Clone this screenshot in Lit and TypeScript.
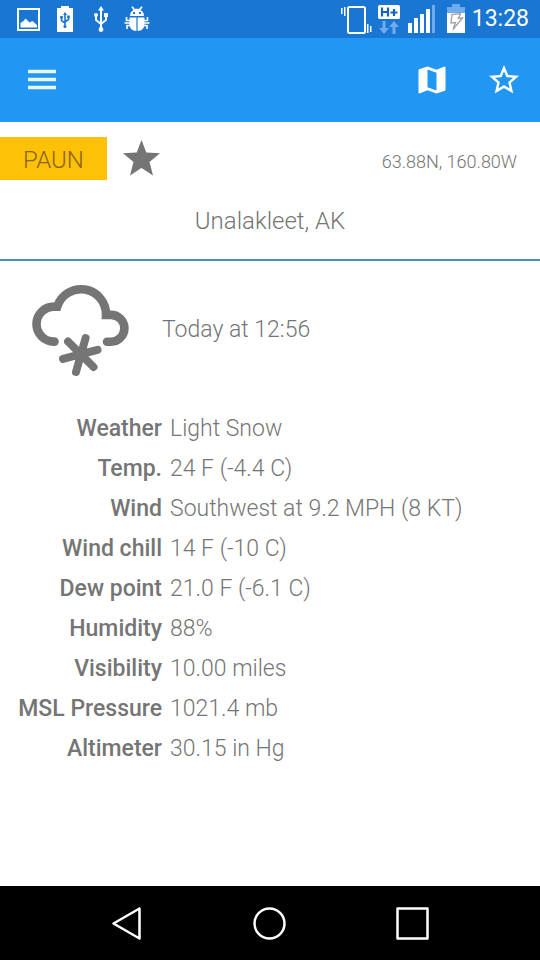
import { LitElement, html, css } from "lit";
import { customElement } from "lit/decorators.js";

@customElement("status-bar")
class StatusBar extends LitElement {
  static styles = css`
    :host {
      display: flex;
      justify-content: space-between;
      height: 38px;
      padding: 0 11px;
      background: #1976d2;
      color: #fff;
    }
    .group {
      display: flex;
      align-items: center;
    }
    svg {
      display: block;
      fill: #fff;
    }
    .clock {
      font-size: 23px;
      font-weight: 400;
      line-height: 38px;
    }
  `;

  render() {
    return html`
      <div class="group">
        <svg width="36" height="38" viewBox="0 0 36 38" aria-hidden="true">
          <path fill-rule="evenodd" d="M6 8h23v23H6zM8 10v19h19V10z" />
          <path d="M9.500 27.500V23l3-2 2-2.500 4 4 3-1.500 4.500 4v2.500z" />
        </svg>
        <svg width="36" height="38" viewBox="0 0 36 38" aria-hidden="true">
          <path d="M14 6h8v2h4v24H10V8h4z" />
          <g fill="none" stroke="#1976d2" stroke-width="1.6">
            <path d="M18 14v13M14.500 17v3.500l3.500 2.500M21.500 16v3.500L18 22" />
          </g>
          <path fill="#1976d2" d="M18 12l2 3h-4zM13.200 16h2.600v2.600h-2.600zM20.200 15.500h2.600v2.600h-2.600z" />
          <circle fill="#1976d2" cx="18" cy="26.500" r="1.600" />
        </svg>
        <svg width="36" height="38" viewBox="0 0 36 38" aria-hidden="true">
          <path fill="none" stroke="#fff" stroke-width="2" d="M18 9v20M13 14v6l5 4M23 14v6l-5 4" />
          <path d="M18 6l3 4.500h-6zM21 13h4v4h-4z" />
          <circle cx="13" cy="15" r="2" />
          <circle cx="18" cy="29.500" r="2.400" />
        </svg>
        <svg width="36" height="38" viewBox="0 0 36 38" aria-hidden="true">
          <path
            fill-rule="evenodd"
            d="M11 16c0-3 1.500-5 3.500-6L12.300 7.300l1.400-1.100 2.300 2.800c1.400-.4 2.600-.4 4 0l2.300-2.800 1.400 1.100L21.500 10c2 1 3.500 3 3.500 6zM14 12v2h2v-2zM20 12v2h2v-2z"
          />
          <path d="M10.500 17.500h6.900v13.500C13 31 10.500 28 10.500 24zM18.600 17.500h6.900V24c0 4-2.500 7-6.900 7z" />
          <path
            fill="none"
            stroke="#fff"
            stroke-width="1.600"
            d="M11 20.500H7.500V17M25 20.500h3.500V17M11 23H5.500M25 23h5.500M11 25.500H8V29M25 25.500h3V29"
          />
        </svg>
      </div>
      <div class="group">
        <svg width="33" height="38" viewBox="0 0 33 38" aria-hidden="true">
          <rect x="8" y="7" width="17" height="26" rx="1.500" fill="none" stroke="#fff" stroke-width="2" />
          <path d="M1 8h1.500v6H1zM4 7h1.500v9H4zM27 24h1.500v9H27zM30 26h1.500v6H30z" />
        </svg>
        <svg width="33" height="38" viewBox="0 0 33 38" aria-hidden="true">
          <rect x="5" y="5" width="22" height="14" rx="1.500" />
          <path
            fill="none"
            stroke="#1565c0"
            stroke-width="2.200"
            d="M9 7.500v9M15 7.500v9M9 12h6M17.500 12.500h7M21 9v7"
          />
          <path
            fill="#6fabed"
            d="M9.500 21h3v7H16l-5 6-5-6h3.500zM19.500 34h3v-7H26l-5-6-5 6h3.500z"
          />
        </svg>
        <svg width="33" height="38" viewBox="0 0 33 38" aria-hidden="true">
          <path d="M2 23h4v10H2zM8 18h4v15H8zM14 14h4v19h-4zM20 9h4v24h-4z" />
          <path fill="#6fabed" d="M26 5h3v28h-3z" />
        </svg>
        <svg width="33" height="38" viewBox="0 0 33 38" aria-hidden="true">
          <path fill="#6fabed" d="M13 4h8v3h5v6H8V7h5z" />
          <path d="M8 13h18v20H8z" />
          <path
            fill="#fff"
            stroke="#a6a6a6"
            stroke-width="1.400"
            d="M13 14.500l8.500-1-2 5 4-.5L14 29.500l2.500-7-4.500.5z"
          />
        </svg>
        <time class="clock">13:28</time>
      </div>
    `;
  }
}

@customElement("app-bar")
class AppBar extends LitElement {
  static styles = css`
    :host {
      display: flex;
      align-items: center;
      justify-content: space-between;
      height: 84px;
      padding: 0 0 0 6px;
      background: #2196f3;
    }
    .actions {
      display: flex;
    }
    button {
      display: grid;
      place-items: center;
      width: 72px;
      height: 72px;
      padding: 0;
      border: 0;
      background: none;
    }
    svg {
      display: block;
      fill: #fff;
    }
  `;

  render() {
    return html`
      <button type="button" aria-label="Menu">
        <svg width="36" height="36" viewBox="0 0 36 36">
          <path fill-opacity=".9" d="M4 7.700h28v3.600H4zM4 15.700h28v3.600H4zM4 23.700h28v3.600H4z" />
        </svg>
      </button>
      <div class="actions">
        <button type="button" aria-label="Map">
          <svg width="36" height="36" viewBox="0 0 24 24">
            <path
              d="M20.500 3l-.16.03L15 5.100 9 3 3.360 4.900c-.21.07-.36.25-.36.48V20.500c0 .28.22.5.5.5l.16-.03L9 18.900l6 2.100 5.640-1.900c.21-.07.36-.25.36-.48V3.500c0-.28-.22-.5-.5-.5zM15 19l-6-2.110V5l6 2.110V19z"
            />
          </svg>
        </button>
        <button type="button" aria-label="Add to favourites">
          <svg width="36" height="36" viewBox="0 0 24 24">
            <path
              d="M22 9.240l-7.190-.62L12 2 9.190 8.630 2 9.240l5.460 4.730L5.820 21 12 17.270 18.180 21l-1.630-7.030L22 9.240zM12 15.400l-3.760 2.270 1-4.280-3.320-2.880 4.380-.38L12 6.100l1.710 4.040 4.380.38-3.320 2.880 1 4.280L12 15.400z"
            />
          </svg>
        </button>
      </div>
    `;
  }
}

@customElement("nav-bar")
class NavBar extends LitElement {
  static styles = css`
    :host {
      display: flex;
      justify-content: center;
      height: 74px;
      background: #000;
    }
    button {
      display: grid;
      place-items: center;
      width: 143px;
      padding: 0;
      border: 0;
      background: none;
    }
    svg {
      display: block;
      fill: none;
      stroke: #fff;
      stroke-width: 2.5;
      stroke-linejoin: round;
    }
  `;

  render() {
    return html`
      <button type="button" aria-label="Back">
        <svg width="36" height="36" viewBox="0 0 36 36"><path d="M30.500 3.500v30L4.500 18.500z" /></svg>
      </button>
      <button type="button" aria-label="Home">
        <svg width="36" height="36" viewBox="0 0 36 36"><circle cx="17.500" cy="18.500" r="15" /></svg>
      </button>
      <button type="button" aria-label="Recent apps">
        <svg width="36" height="36" viewBox="0 0 36 36"><path d="M2.500 3.500h30v30h-30z" /></svg>
      </button>
    `;
  }
}

@customElement("app-root")
class AppRoot extends LitElement {
  static styles = css`
    :host {
      display: flex;
      flex-direction: column;
      min-height: 100vh;
      background: #fff;
      color: #757575;
      font-family: Roboto, "Liberation Sans", sans-serif;
      font-size: 23px;
      font-weight: 300;
      line-height: 40px;
    }
    main {
      flex: 1;
    }
    .station {
      border-bottom: 2px solid #4690c0;
    }
    .row {
      display: flex;
      align-items: flex-start;
      padding: 15px 23px 0 0;
    }
    .code {
      padding: 3px 23px 0;
      background: #ffc107;
      color: #8a6415;
      font-size: 24px;
    }
    .star {
      display: block;
      margin: 3px 0 0 16px;
      fill: #757575;
    }
    .coords {
      margin-left: auto;
      padding-top: 5px;
      font-size: 18px;
    }
    h1 {
      margin: 0;
      padding: 19px 0 18px;
      font-size: 24px;
      font-weight: 300;
      text-align: center;
    }
    .now {
      display: flex;
      align-items: center;
    }
    .time {
      padding-top: 2px;
    }
    .sky {
      display: block;
      fill: none;
      stroke: #757575;
    }
    table {
      margin-top: 12px;
      border-spacing: 0;
    }
    th,
    td {
      padding: 0;
      text-align: left;
    }
    th {
      width: 162px;
      font-weight: 500;
      text-align: right;
    }
    td {
      padding-left: 8px;
    }
  `;

  private readings = [
    ["Weather", "Light Snow"],
    ["Temp.", "24 F (-4.4 C)"],
    ["Wind", "Southwest at 9.2 MPH (8 KT)"],
    ["Wind chill", "14 F (-10 C)"],
    ["Dew point", "21.0 F (-6.1 C)"],
    ["Humidity", "88%"],
    ["Visibility", "10.00 miles"],
    ["MSL Pressure", "1021.4 mb"],
    ["Altimeter", "30.15 in Hg"],
  ];

  render() {
    return html`
      <status-bar></status-bar>
      <app-bar></app-bar>
      <main>
        <header class="station">
          <div class="row">
            <span class="code">PAUN</span>
            <svg class="star" width="37" height="36" viewBox="0 0 37 36" role="img" aria-label="Favourite">
              <path d="M18.500 0l4.800 12.500L37 13.300 26.500 22l3.500 13.500-11.500-7.500L7 35.500 10.500 22 0 13.300l13.700-.8z" />
            </svg>
            <span class="coords">63.88N, 160.80W</span>
          </div>
          <h1>Unalakleet, AK</h1>
        </header>
        <section class="now">
          <svg class="sky" width="162" height="136" viewBox="0 261 162 136" role="img" aria-label="Snow">
            <path
              stroke-width="8.600"
              stroke-linecap="round"
              d="M107 341.700h4a13.400 13.400 0 0 0 0-26.800H106A25 25 0 0 0 57.200 306.600H54a17.500 17.500 0 0 0 0 35h.500"
            />
            <path
              stroke-width="8"
              stroke-linecap="round"
              d="M85.600 338L76 372M63 358.800l34.500-9M68 341.500l25.500 25.500"
            />
          </svg>
          <span class="time">Today at 12:56</span>
        </section>
        <table>
          <tbody>
            ${this.readings.map(
              ([name, value]) => html`<tr>
                <th scope="row">${name}</th>
                <td>${value}</td>
              </tr>`
            )}
          </tbody>
        </table>
      </main>
      <nav-bar></nav-bar>
    `;
  }
}
